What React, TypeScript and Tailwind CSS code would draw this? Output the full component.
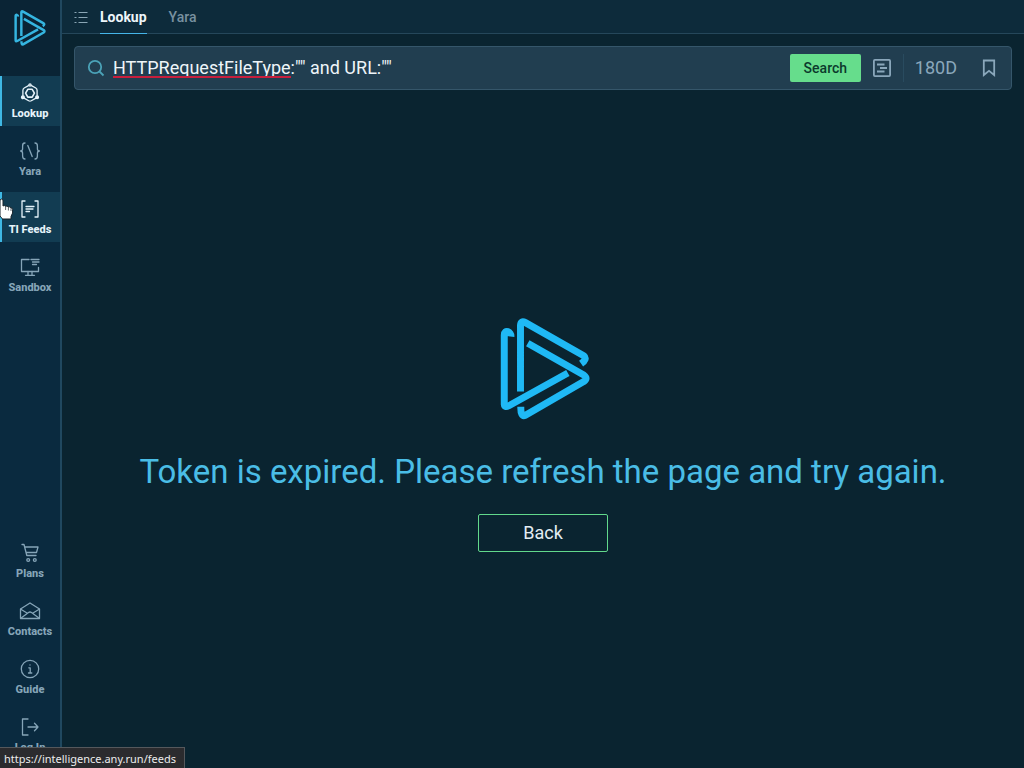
import React from 'react';
import clsx from 'clsx';

interface IconProps {
  className?: string;
}

interface NavItem {
  label: string;
  icon: React.FC;
  active?: boolean;
}

const Logo: React.FC<IconProps> = ({ className }) => (
  <svg
    viewBox="60 50 270 308"
    fill="none"
    stroke="currentColor"
    strokeWidth="21"
    strokeLinejoin="round"
    className={className}
    aria-hidden="true"
  >
    <path d="M92 106 C94 92 72 82 72 102 V310 Q73 322 86 315 L264 216" />
    <path d="M121 272 V72 Q122 56 136 64 L312 164 Q324 174 304 188" />
    <path d="M143 126 L312 222 Q326 232 312 242 L136 344 Q121 350 122 318" />
  </svg>
);

const Icon: React.FC<{ children: React.ReactNode }> = ({ children }) => (
  <svg
    viewBox="0 0 22 22"
    fill="none"
    stroke="currentColor"
    strokeWidth="1.3"
    strokeLinecap="round"
    strokeLinejoin="round"
    className="h-[22px] w-[22px]"
    aria-hidden="true"
  >
    {children}
  </svg>
);

const LookupIcon = () => (
  <Icon>
    <path d="M8.8 7.3 H13.2 L15.4 11.2 L13.2 15.1 H8.8 L6.6 11.2 Z" strokeWidth="1.6" />
    <path d="M9.5 3.6 L5.2 6 Q3.9 6.8 3.9 8.4 V13.4 M12.5 3.6 L16.8 6 Q18.1 6.8 18.1 8.4 V13.4 M5.5 16.4 L9.7 18.8 Q11 19.5 12.3 18.8 L16.5 16.4" />
    <circle cx="11" cy="3" r="1.1" />
    <circle cx="3.9" cy="15.3" r="1.4" fill="currentColor" />
    <circle cx="18.1" cy="15.3" r="1.4" fill="currentColor" />
  </Icon>
);

const YaraIcon = () => (
  <Icon>
    <path d="M6 3 C3.6 3 3.6 4.4 3.6 6 V8.5 C3.6 10.2 3 11 1.6 11 C3 11 3.6 11.8 3.6 13.5 V16 C3.6 17.8 3.6 19 6 19" />
    <path d="M16 3 C18.4 3 18.4 4.4 18.4 6 V8.5 C18.4 10.2 19 11 20.4 11 C19 11 18.4 11.8 18.4 13.5 V16 C18.4 17.8 18.4 19 16 19" />
    <path d="M8.8 5.5 L13.2 16.5" />
  </Icon>
);

const FeedsIcon = () => (
  <Icon>
    <path d="M6 3 H3 V19 H6 M16 3 H19 V19 H16" />
    <path d="M7 8.5 H15 M7 11 H14 M7 13.5 H10.5" />
  </Icon>
);

const SandboxIcon = () => (
  <Icon>
    <path d="M10 3.5 H2.5 V15.5 H19.5 V11.5" />
    <path d="M12 3.5 H20 M13.5 6 H20 M13.5 8.5 H17.5" />
    <path d="M9 15.5 V19 M13 15.5 V19 M6.5 19.3 H15.5" />
  </Icon>
);

const PlansIcon = () => (
  <Icon>
    <path d="M3 2.5 H5 L7.8 13.5 H17 M5.8 5 H19 L17.5 10.5 H7.2" />
    <circle cx="9.2" cy="18" r="1.4" />
    <circle cx="15.8" cy="18" r="1.4" />
  </Icon>
);

const ContactsIcon = () => (
  <Icon>
    <path d="M1.5 9 L11 3 L20.5 9 V18.5 H1.5 Z" />
    <path d="M1.8 9.2 L8 13 M20.2 9.2 L14 13 M1.8 18.2 L9.5 12.5 Q11 11.5 12.5 12.5 L20.2 18.2" />
  </Icon>
);

const GuideIcon = () => (
  <Icon>
    <circle cx="11" cy="11" r="8.7" />
    <path d="M9.8 9.8 H11.2 V14.8 M9.5 15 H12.8 M11 6.8 V7" />
  </Icon>
);

const LoginIcon = () => (
  <Icon>
    <path d="M9 3 H3.5 V19 H9" />
    <path d="M9 11 H19 M15.5 7.3 L19 11 L15.5 14.7" />
  </Icon>
);

const mainItems: NavItem[] = [
  { label: 'Lookup', icon: LookupIcon, active: true },
  { label: 'Yara', icon: YaraIcon },
  { label: 'TI Feeds', icon: FeedsIcon, active: true },
  { label: 'Sandbox', icon: SandboxIcon },
];

const bottomItems: NavItem[] = [
  { label: 'Plans', icon: PlansIcon },
  { label: 'Contacts', icon: ContactsIcon },
  { label: 'Guide', icon: GuideIcon },
  { label: 'Log In', icon: LoginIcon },
];

const NavList: React.FC<{ items: NavItem[] }> = ({ items }) => (
  <ul className="flex flex-col gap-2">
    {items.map(({ label, icon: ItemIcon, active }) => (
      <li key={label}>
        <a
          href="#"
          className={clsx(
            'flex h-[50px] flex-col items-center gap-1 border-l-2 pt-1.5 pr-0.5 text-[11px] leading-3 font-extrabold whitespace-nowrap',
            active
              ? 'border-[#3fb8e4] bg-[#123c52] text-[#e6f3fa]'
              : 'border-transparent text-[#86a5b8]',
          )}
        >
          <ItemIcon />
          <span>{label}</span>
        </a>
      </li>
    ))}
  </ul>
);

const Sidebar: React.FC = () => (
  <aside className="sticky top-0 flex h-screen w-[62px] shrink-0 flex-col border-r-2 border-[#20485f] bg-[#0a2a3f] pb-2">
    <a href="#" aria-label="Home" className="flex h-[76px] justify-center bg-[#0a2435] pt-2.5">
      <Logo className="h-9 w-8 text-[#35b5e0]" />
    </a>
    <nav className="flex grow flex-col justify-between">
      <NavList items={mainItems} />
      <NavList items={bottomItems} />
    </nav>
  </aside>
);

const Tabs: React.FC = () => (
  <header className="flex h-[34px] items-stretch border-b border-[#25475a] bg-[#0d2b3b] pl-3 text-sm leading-5">
    <button type="button" aria-label="Toggle list" className="mr-3 text-[#8aa6b5]">
      <svg
        viewBox="0 0 14 14"
        fill="none"
        stroke="currentColor"
        strokeWidth="1.2"
        className="h-3.5 w-3.5"
        aria-hidden="true"
      >
        <path d="M4.5 2.5 H13.5 M4.5 7.5 H13.5 M4.5 12.5 H13.5 M0.5 2.5 H2.5 M0.5 7.5 H2.5 M0.5 12.5 H2.5" />
      </svg>
    </button>
    <a href="#" className="-mb-px flex items-center border-b border-[#45b5e8] font-bold text-[#eef6fa]">
      Lookup
    </a>
    <a href="#" className="ml-5.5 flex items-center font-medium text-[#7891a0]">
      Yara
    </a>
  </header>
);

const SearchBar: React.FC = () => {
  const [query, setQuery] = React.useState('HTTPRequestFileType:"" and URL:""');
  const word = query.split(':')[0];

  return (
    <form
      className="mx-3 mt-3 flex h-11 items-center rounded-sm border border-[#35566a] bg-[#213e50] pr-px"
      onSubmit={(e) => e.preventDefault()}
    >
      <svg
        viewBox="0 0 18 18"
        fill="none"
        stroke="currentColor"
        strokeWidth="1.8"
        className="mr-2 ml-3 h-[18px] w-[18px] text-[#4ba3b8]"
        aria-hidden="true"
      >
        <circle cx="8" cy="8" r="6.2" />
        <path d="M12.5 12.5 L16.5 16.5" />
      </svg>
      <div className="relative min-w-0 grow">
        <input
          type="text"
          aria-label="Search query"
          spellCheck={false}
          value={query}
          onChange={(e) => setQuery(e.target.value)}
          className="block w-full bg-transparent text-lg leading-6 text-[#eef5f9] outline-none"
        />
        {/* spelling mark under the field name */}
        <span
          aria-hidden="true"
          className="pointer-events-none absolute top-0 left-0 border-b-2 border-[#c81e3c] text-lg leading-5 text-transparent select-none"
        >
          {word}
        </span>
      </div>
      <button type="submit" className="h-7 w-[71px] rounded-xs bg-[#66dd8c] text-sm font-medium text-[#0c3a2c]">
        Search
      </button>
      <button type="button" aria-label="Query builder" className="ml-3 text-[#8aa7bb]">
        <svg
          viewBox="0 0 18 18"
          fill="none"
          stroke="currentColor"
          strokeWidth="1.8"
          className="h-[18px] w-[18px]"
          aria-hidden="true"
        >
          <rect x="0.9" y="0.9" width="16.2" height="16.2" rx="1" />
          <path d="M4 5.5 H11.5 M7 9 H14 M4 12.5 H11.5" />
        </svg>
      </button>
      <button
        type="button"
        className="ml-3 h-7 border-l border-[#294b5f] px-[11px] text-lg leading-6 text-[#8aa7bb]"
      >
        180D
      </button>
      <button type="button" aria-label="Bookmark" className="flex w-[42px] justify-center text-[#8aa7bb]">
        <svg
          viewBox="0 0 14 18"
          fill="none"
          stroke="currentColor"
          strokeWidth="1.8"
          className="h-[18px] w-3.5"
          aria-hidden="true"
        >
          <path d="M1.8 1.5 H12.2 V16 L7 11.8 L1.8 16 Z" />
        </svg>
      </button>
    </form>
  );
};

const HandCursor: React.FC = () => (
  <svg
    viewBox="0 0 14 22"
    fill="#fff"
    stroke="#17232b"
    strokeWidth="1"
    strokeLinejoin="round"
    className="pointer-events-none fixed top-[198px] left-0 h-[22px] w-3.5"
    aria-hidden="true"
  >
    <path d="M0 2 Q1.5 0 3 2 V8 Q4.2 6.8 5.6 8.3 Q7 7.4 8.4 9 Q10 8.4 11 9.8 Q12.6 9.8 12.6 11.5 V15 L11 18.5 V21 H2.5 L0 18 Z" />
    <path d="M5.6 8.5 V12 M8.4 9.2 V12.5 M11 10 V13" strokeWidth="0.7" />
  </svg>
);

const App: React.FC = () => (
  <div className="flex min-h-screen bg-[#0a2430] font-['Roboto',sans-serif]">
    <Sidebar />
    <div className="flex min-w-0 grow flex-col">
      <Tabs />
      <SearchBar />
      <main className="flex grow flex-col items-center justify-center px-4 pt-3">
        <Logo className="ml-1 h-[102px] w-[90px] text-[#1fb9f5]" />
        <h1 className="mt-8 text-center text-[33px] leading-10 text-[#4abde6]">
          Token is expired. Please refresh the page and try again.
        </h1>
        <button
          type="button"
          className="mt-5.5 h-[38px] w-[130px] rounded-xs border border-[#62d98c] text-lg leading-6 text-[#e3edf3]"
        >
          Back
        </button>
      </main>
    </div>
    <HandCursor />
    <div className="fixed bottom-0 left-0 h-[21px] w-[185px] border-t border-r border-[#55585c] bg-[#2b2b2e] px-1 font-['Noto_Sans',sans-serif] text-[11px] leading-[22px] whitespace-nowrap text-[#ececec]">
      https://intelligence.any.run/feeds
    </div>
  </div>
);

export default App;
